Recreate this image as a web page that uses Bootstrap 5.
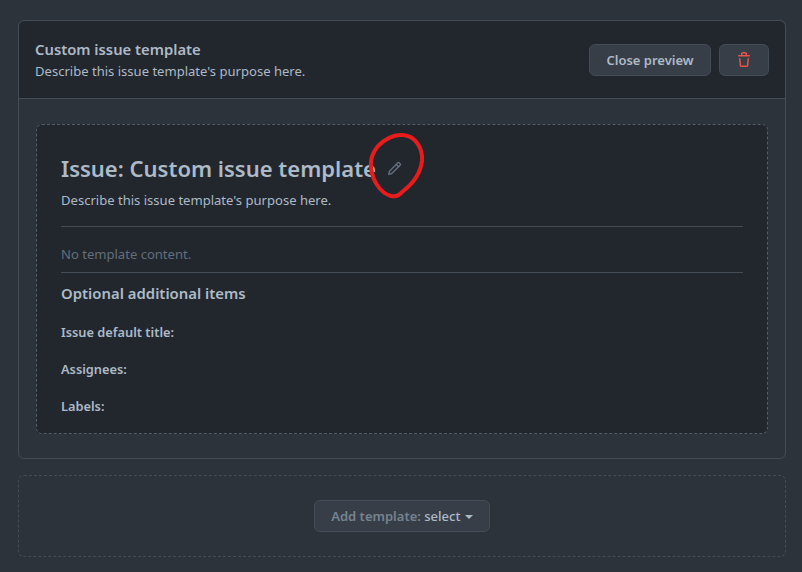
<!DOCTYPE html>
<html lang="en" data-bs-theme="dark">
<head>
    <meta charset="UTF-8" />
    <meta name="viewport" content="width=device-width, initial-scale=1" />
    <title>Custom issue template</title>
    <link href="https://cdn.jsdelivr.net/npm/bootstrap@5.3.0/dist/css/bootstrap.min.css" rel="stylesheet" />
    <style>
        body {
            background: #2d333b;
            color: #adbac7;
            font-family: "Noto Sans", sans-serif;
            font-size: 13.05px;
            line-height: 21px;
            height: 572px;
            overflow: hidden;
            padding: 20px 16px 0 18px;
            position: relative;
        }
        .tpl-box {
            border: 1px solid #444c56;
            border-radius: 6px;
            height: 439px;
        }
        .tpl-head {
            background: #22272e;
            border-bottom: 1px solid #444c56;
            border-radius: 6px 6px 0 0;
            height: 78px;
            padding: 0 16px;
        }
        .tpl-name { font-size: 14.8px; font-weight: 600; line-height: 23px; }
        .gh-btn {
            background: #373e47;
            border: 1px solid #444c56;
            border-radius: 6px;
            color: #adbac7;
            font-size: 13px;
            font-weight: 600;
            line-height: 20px;
            height: 32px;
            padding: 5px 0;
        }
        .gh-btn:hover { background: #373e47; border-color: #444c56; color: #adbac7; }
        .close-btn { width: 122px; }
        .trash-btn { width: 50px; padding: 0; color: #e5534b; }
        .tpl-body { padding: 25px 17px 0; }
        .tpl-preview {
            background: #22272e;
            border: 1px dashed #545d68;
            border-radius: 6px;
            height: 310px;
            padding: 23px 24px 0;
        }
        .tpl-title { color: #adbac7; font-size: 22px; font-weight: 600; line-height: 40px; margin: 0; }
        .pencil { color: #636e7b; margin-left: 11px; margin-top: 1px; }
        .tpl-desc { margin: 2px 0 15px; }
        .tpl-rule { border-top: 1px solid #444c56; }
        .tpl-empty { color: #636e7b; padding: 17px 0 7px; }
        .tpl-sub { color: #adbac7; font-size: 14.9px; font-weight: 600; line-height: 24px; margin: 8px 0 17px; }
        .tpl-field { font-size: 12.8px; font-weight: 600; line-height: 20px; margin-bottom: 17px; }
        .add-box {
            border: 1px dashed #444c56;
            border-radius: 6px;
            height: 82px;
            margin-top: 16px;
        }
        .add-btn { color: #768390; background: #373e47; width: 176px; padding: 5px 0; }
        .add-btn:disabled { color: #768390; background: #373e47; border-color: #444c56; opacity: 1; }
        .add-btn b { color: #adbac7; font-weight: 500; }
        .add-caret {
            border-top: 4px solid #adbac7;
            border-left: 4px solid transparent;
            border-right: 4px solid transparent;
            display: inline-block;
            margin-left: 1px;
            vertical-align: middle;
        }
        .red-ring { position: absolute; left: 360px; top: 125px; }
    </style>
</head>
<body>
<div class="tpl-box">
    <div class="tpl-head d-flex align-items-center justify-content-between">
        <div>
            <div class="tpl-name">Custom issue template</div>
            <div>Describe this issue template's purpose here.</div>
        </div>
        <div class="d-flex gap-2 align-items-center">
            <button type="button" class="btn gh-btn close-btn">Close preview</button>
            <button type="button" class="btn gh-btn trash-btn d-flex align-items-center justify-content-center" aria-label="Delete">
                <svg width="16" height="16" viewBox="0 0 16 16" fill="currentColor"><path d="M11 1.75V3h2.25a.75.75 0 0 1 0 1.5H2.75a.75.75 0 0 1 0-1.5H5V1.75C5 .784 5.784 0 6.75 0h2.5C10.216 0 11 .784 11 1.75ZM4.496 6.675l.66 6.6a.25.25 0 0 0 .249.225h5.19a.25.25 0 0 0 .249-.225l.66-6.6a.75.75 0 0 1 1.492.149l-.66 6.6A1.748 1.748 0 0 1 10.595 15h-5.19a1.75 1.75 0 0 1-1.741-1.575l-.66-6.6a.75.75 0 1 1 1.492-.15ZM6.5 1.75V3h3V1.75a.25.25 0 0 0-.25-.25h-2.5a.25.25 0 0 0-.25.25Z"/></svg>
            </button>
        </div>
    </div>
    <div class="tpl-body">
        <div class="tpl-preview">
            <div class="d-flex align-items-center">
                <h1 class="tpl-title">Issue: Custom issue template</h1>
                <svg class="pencil" width="15" height="15" viewBox="0 0 16 16" fill="currentColor"><path d="M11.013 1.427a1.75 1.75 0 0 1 2.474 0l1.086 1.086a1.75 1.75 0 0 1 0 2.474l-8.61 8.61c-.21.21-.47.364-.756.445l-3.251.93a.75.75 0 0 1-.927-.928l.929-3.25c.081-.286.235-.547.445-.758l8.61-8.61Zm.176 4.823L9.75 4.81l-6.286 6.287a.253.253 0 0 0-.064.108l-.558 1.953 1.953-.558a.253.253 0 0 0 .108-.064Zm1.238-3.763a.25.25 0 0 0-.354 0L10.811 3.75l1.439 1.44 1.263-1.263a.25.25 0 0 0 0-.354Z"/></svg>
            </div>
            <div class="tpl-desc">Describe this issue template's purpose here.</div>
            <div class="tpl-rule"></div>
            <div class="tpl-empty">No template content.</div>
            <div class="tpl-rule"></div>
            <h3 class="tpl-sub">Optional additional items</h3>
            <div class="tpl-field">Issue default title:</div>
            <div class="tpl-field">Assignees:</div>
            <div class="tpl-field">Labels:</div>
        </div>
    </div>
</div>
<div class="add-box d-flex align-items-center justify-content-center">
    <button type="button" class="btn gh-btn add-btn" disabled>Add template: <b>select</b> <span class="add-caret"></span></button>
</div>
<!-- hand drawn annotation over the screenshot -->
<svg class="red-ring" width="70" height="80" viewBox="0 0 70 80" fill="none">
    <path d="M43 10C33 9 24 15 18 21C13 27 10 33 11 42C12 55 20 68 31 71C36 72 39 71 42 67C50 61 60 52 62 36C63 24 56 11 43 10Z" stroke="#e81c1c" stroke-width="4" stroke-linejoin="round"/>
</svg>
<script src="https://cdn.jsdelivr.net/npm/bootstrap@5.3.0/dist/js/bootstrap.bundle.min.js"></script>
</body>
</html>
